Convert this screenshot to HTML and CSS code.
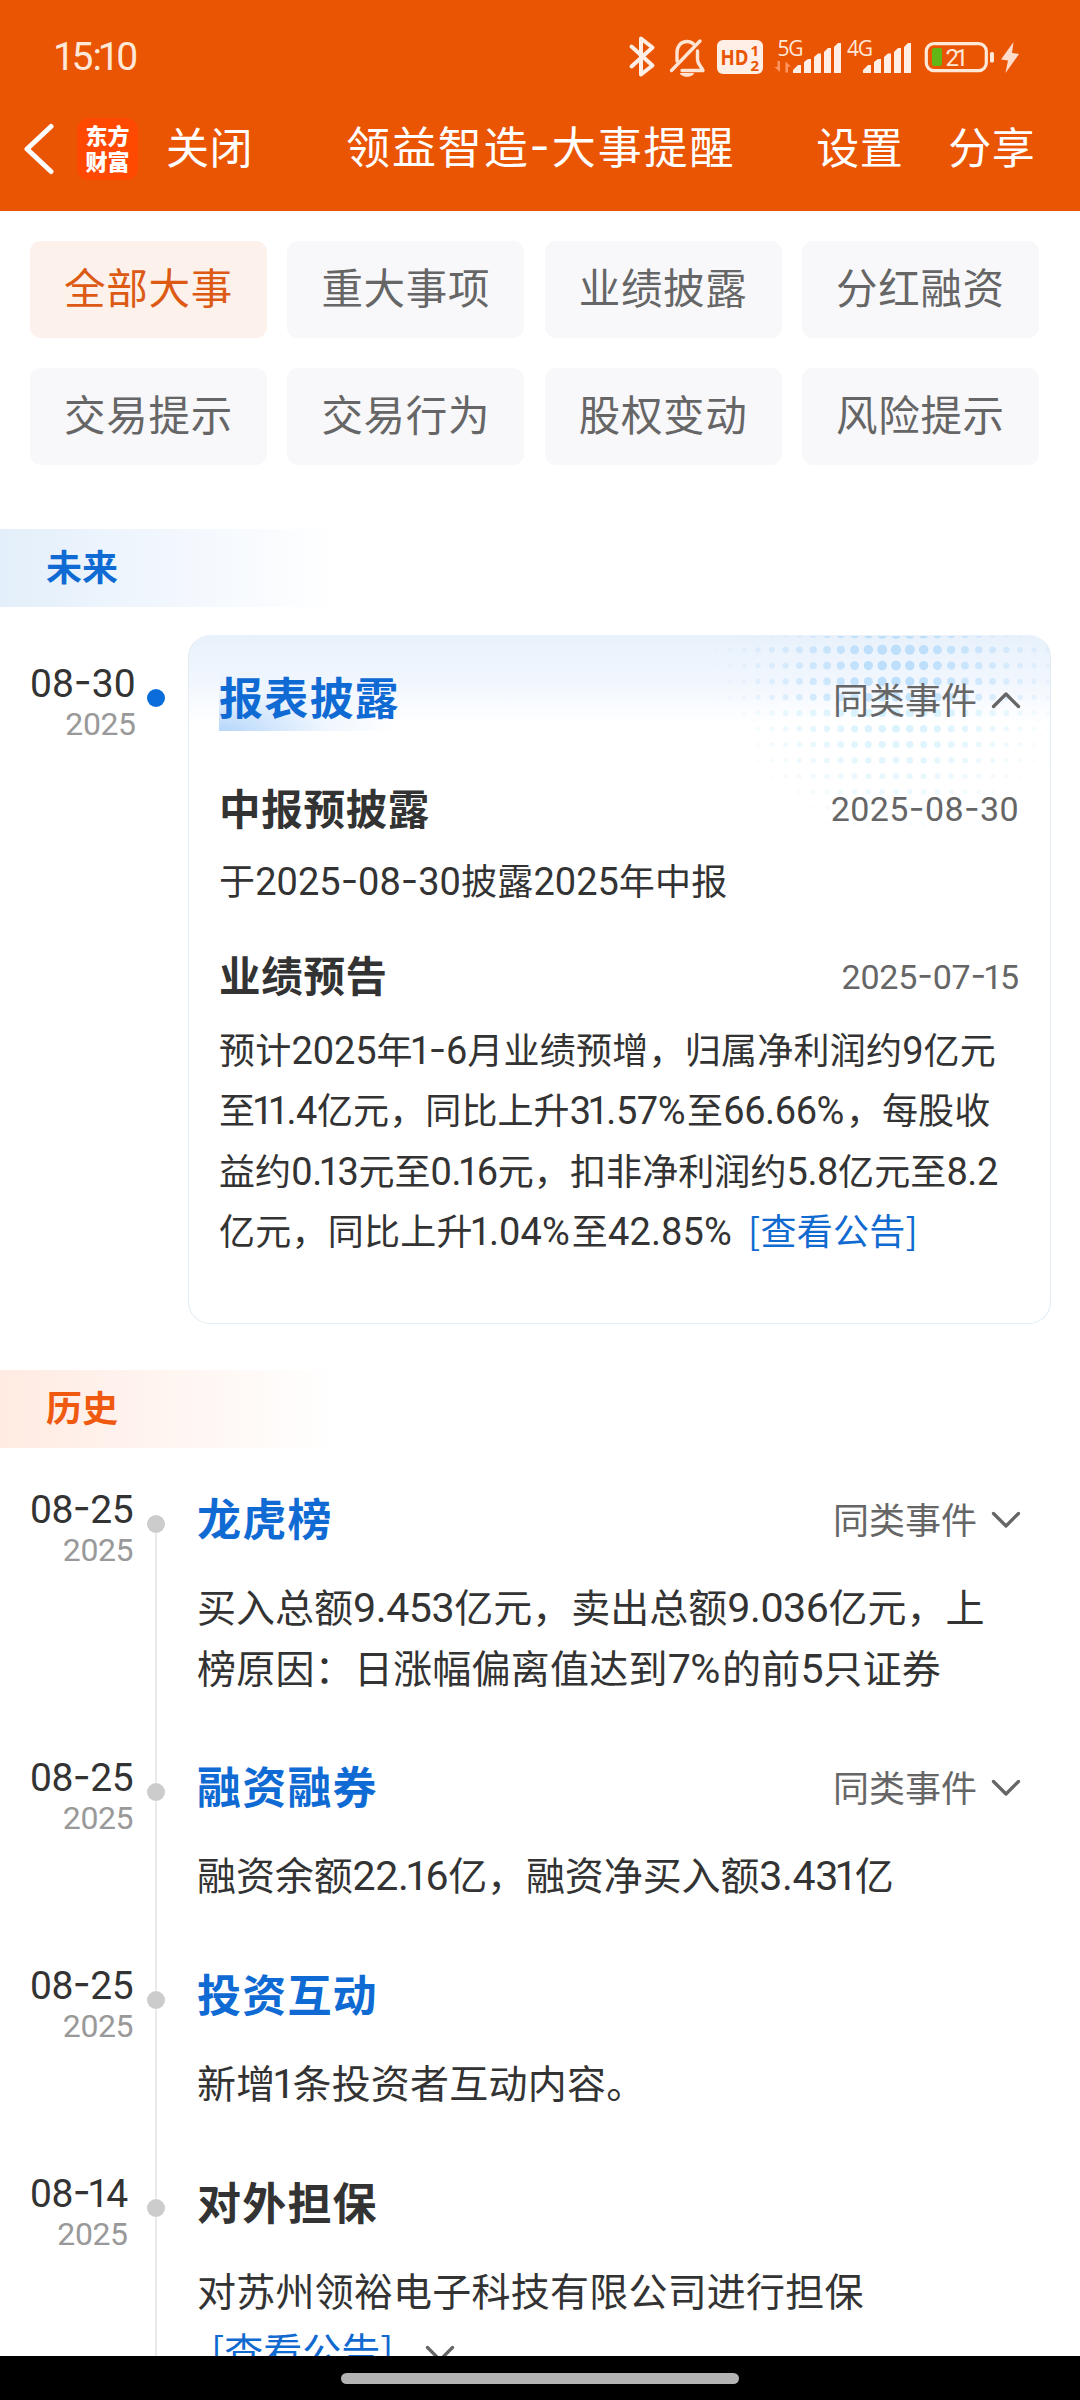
FILE: index.html
```html
<!DOCTYPE html>
<html lang="zh-CN">
<head>
<meta charset="utf-8">
<title>领益智造-大事提醒</title>
<link rel="stylesheet" href="styles.css">
</head>
<body>
<div class="screen">
  <header class="top">
    <div class="status">
      <span class="clock"><i class="one">1</i>5:<i class="one">1</i>0</span>
      <svg class="status-icons" viewBox="620 30 410 50" width="410" height="50">
        <path d="M631.5 46.5 652.5 65.5 641 74.5V38.5L652.5 47.5 631.5 66.5" fill="none" stroke="#ffefe6" stroke-width="4" stroke-linecap="round" stroke-linejoin="round"/>
        <g fill="none" stroke="#ffe3d3" stroke-width="3.4" stroke-linecap="round">
          <path d="M671.5 70.5 700 41"/>
          <path d="M677 61V53C677 46 681 41.500 687 41.500 690 41.500 692 42.500 693.500 44"/>
          <path d="M697.500 51V60C698 65 702 67 703 70.500H682" stroke-linejoin="round"/>
        </g>
        <path d="M680 73h14c-1 5-13 5-14 0z" fill="#ffe3d3"/>
        <rect x="717" y="40" width="46" height="34" rx="6" fill="#ffefe6"/>
        <text class="hd" x="720.500" y="64.500" textLength="28" lengthAdjust="spacingAndGlyphs">HD</text>
        <text class="hd-sub" x="750.500" y="56">1</text>
        <text class="hd-sub" x="750.500" y="70.500">2</text>
        <text class="net" x="777.500" y="55.500" textLength="26">5G</text>
        <path d="M780 61v11l-5.500-5h3V61zM785.500 72.500v-11l5.500 5h-3v6z" fill="#ff9560"/>
        <path d="M793 73v-3l5-5h3v8zM804 73V62l4-3h3v14zM814 73V57l4-3.500h3V73zM824 73V52l4-4h3v25zM834 73V47l4-4h3v30z" fill="#ffefe6"/>
        <text class="net" x="847" y="55.500" textLength="26">4G</text>
        <path d="M863 73v-3l5-5h3v8zM874 73V62l4-3h3v14zM884 73V57l4-3.500h3V73zM894 73V52l4-4h3v25zM904 73V47l4-4h3v30z" fill="#ffefe6"/>
        <rect x="926.300" y="43.600" width="60" height="27" rx="7.500" fill="none" stroke="#ffe8d8" stroke-width="3.200"/>
        <rect x="990" y="52" width="4" height="10.500" rx="1.500" fill="#ffe8d8"/>
        <rect x="932" y="48" width="10" height="18" rx="2" fill="#62b714"/>
        <text class="pct" x="945.500" y="66" textLength="23">21</text>
        <path d="M1013.500 42 1001 59.500 1008 60.500 1005.500 73 1019 54 1012 53z" fill="#ffdccb"/>
      </svg>
    </div>
    <nav class="nav">
      <svg class="back" viewBox="0 0 32 52" width="32" height="52"><path d="M28 3.500 4 26 28 48.500" fill="none" stroke="#fff" stroke-width="5" stroke-linecap="round" stroke-linejoin="round"/></svg>
      <span class="logo"><span>东方</span><span>财富</span></span>
      <span class="close">关闭</span>
      <h1 class="title">领益智造<i class="dash">-</i>大事提醒</h1>
      <span class="act">设置</span>
      <span class="act share">分享</span>
    </nav>
  </header>

  <main class="page">
    <div class="chips">
      <span class="chip on">全部大事</span><span class="chip">重大事项</span><span class="chip">业绩披露</span><span class="chip">分红融资</span>
      <span class="chip">交易提示</span><span class="chip">交易行为</span><span class="chip">股权变动</span><span class="chip">风险提示</span>
    </div>

    <h2 class="band future">未来</h2>
    <section class="item upcoming">
      <div class="when"><div class="when-in"><span class="day">08<i class="dash">-</i>30</span><span class="year">2025</span></div></div>
      <div class="rail"><i class="dot"></i></div>
      <article class="card">
        <svg class="halftone" width="380" height="240"></svg>
        <div class="row head">
          <h3 class="name glow">报表披露</h3>
          <span class="same">同类事件<svg class="chev" viewBox="0 0 30 18" width="30" height="18"><path d="M2.500 15.500 15 3 27.500 15.500"/></svg></span>
        </div>
        <div class="row sub"><h4 class="subname">中报预披露</h4><span class="stamp">2025<i class="dash">-</i>08<i class="dash">-</i>30</span></div>
        <p class="text t0"><span class="line l0">于<b>2025<i class="dash">-</i>08<i class="dash">-</i>30</b>披露<b>2025</b>年中报</span></p>
        <div class="row sub second"><h4 class="subname">业绩预告</h4><span class="stamp s2">2025<i class="dash">-</i>07<i class="dash">-</i><i class="one">1</i>5</span></div>
        <p class="text t1">
          <span class="line">预计<b>2025</b>年<b><i class="one">1</i><i class="dash">-</i>6</b>月业绩预增，归属净利润约<b>9</b>亿元</span>
          <span class="line l2">至<b><i class="one">1</i><i class="one">1</i>.4</b>亿元，同比上升<b>3<i class="one">1</i>.57<i class="per">%</i></b>至<b>66.66<i class="per">%</i></b>，每股收</span>
          <span class="line l3">益约<b>0.<i class="one">1</i>3</b>元至<b>0.<i class="one">1</i>6</b>元，扣非净利润约<b>5.8</b>亿元至<b>8.2</b></span>
          <span class="line l4">亿元，同比上升<b><i class="one">1</i>.04<i class="per">%</i></b>至<b>42.85<i class="per">%</i></b> <a class="link">[查看公告]</a></span>
        </p>
      </article>
    </section>

    <h2 class="band history">历史</h2>
    <section class="list">
      <div class="item first">
        <div class="when"><div class="when-in"><span class="day">08<i class="dash">-</i>25</span><span class="year">2025</span></div></div>
        <div class="rail"><i class="dot"></i></div>
        <div class="body">
          <div class="row"><h3 class="name">龙虎榜</h3><span class="same">同类事件<svg class="chev" viewBox="0 0 30 18" width="30" height="18"><path d="M2.500 2.500 15 15 27.500 2.500"/></svg></span></div>
          <p class="text">
            <span class="line">买入总额<b>9.453</b>亿元，卖出总额<b>9.036</b>亿元，上</span>
            <span class="line loose">榜原因：日涨幅偏离值达到<b>7<i class="per">%</i></b>的前<b>5</b>只证券</span>
          </p>
        </div>
      </div>
      <div class="item">
        <div class="when"><div class="when-in"><span class="day">08<i class="dash">-</i>25</span><span class="year">2025</span></div></div>
        <div class="rail"><i class="dot"></i></div>
        <div class="body">
          <div class="row"><h3 class="name">融资融券</h3><span class="same">同类事件<svg class="chev" viewBox="0 0 30 18" width="30" height="18"><path d="M2.500 2.500 15 15 27.500 2.500"/></svg></span></div>
          <p class="text"><span class="line tight">融资余额<b>22.<i class="one">1</i>6</b>亿，融资净买入额<b>3.43<i class="one">1</i></b>亿</span></p>
        </div>
      </div>
      <div class="item">
        <div class="when"><div class="when-in"><span class="day">08<i class="dash">-</i>25</span><span class="year">2025</span></div></div>
        <div class="rail"><i class="dot"></i></div>
        <div class="body">
          <div class="row"><h3 class="name">投资互动</h3></div>
          <p class="text"><span class="line loose">新增<b><i class="one">1</i></b>条投资者互动内容。</span></p>
        </div>
      </div>
      <div class="item">
        <div class="when"><div class="when-in"><span class="day">08<i class="dash">-</i><i class="one">1</i>4</span><span class="year">2025</span></div></div>
        <div class="rail"><i class="dot"></i></div>
        <div class="body">
          <div class="row"><h3 class="name dark">对外担保</h3></div>
          <p class="text">
            <span class="line loose">对苏州领裕电子科技有限公司进行担保</span>
            <span class="line more"><a class="link">[查看公告]</a><svg class="chev" viewBox="0 0 30 18" width="30" height="18"><path d="M2.500 2.500 15 15 27.500 2.500"/></svg></span>
          </p>
        </div>
      </div>
    </section>
  </main>
  <footer class="gesture"><span class="pill"></span></footer>
</div>
<script src="script.js"></script>
</body>
</html>
```
FILE: styles.css
```css
* { box-sizing: border-box; }
body { margin: 0; background: #fff; font-family: "Noto Sans CJK SC", sans-serif; color: #333; }
h1, h2, h3, h4, p { margin: 0; font-weight: 400; }
i { font-style: normal; }
b { font-family: Roboto, sans-serif; font-weight: 400; font-size: 1.055em; line-height: 0; letter-spacing: -0.01em; }
.dash { font-family: Inter, sans-serif; line-height: 0; position: relative; top: -0.04em; }
.one { margin: 0 -0.06em 0 -0.08em; }
.per { margin-right: 0.05em; }

.screen { width: 1080px; height: 2400px; display: flex; flex-direction: column; overflow: hidden; }

.top { height: 211px; flex: none; background: #ea5504; color: #fff; }
.status { height: 86px; display: flex; justify-content: space-between; align-items: flex-start; padding: 30px 50px 0 56px; }
.clock { font: 400 39px/54px Roboto, sans-serif; color: #ffe8d8; letter-spacing: -1px; }
.status-icons { flex: none; }
.hd { font: 700 21px "Open Sans", sans-serif; fill: #ea5504; }
.hd-sub { font: 700 15px "Open Sans", sans-serif; fill: #ea5504; }
.net { font: 400 21px "Open Sans", sans-serif; fill: #ffe8d8; }
.pct { font: 400 24px Roboto, sans-serif; fill: #ffe8d8; }

.nav { height: 125px; display: flex; align-items: center; font-size: 43px; line-height: 60px; letter-spacing: 0.5px; }
.back { margin-left: 23px; flex: none; }
.logo { width: 61px; height: 62px; margin-left: 22px; border-radius: 12px; background: #ff4800; display: flex; flex-direction: column; align-items: center; justify-content: center; font-size: 22px; line-height: 26px; font-weight: 900; letter-spacing: 0; padding-bottom: 3px; }
.close, .title, .act { padding-bottom: 7px; white-space: nowrap; flex: none; }
.close { margin-left: 28px; }
.title { margin-left: 93px; font-size: 44px; letter-spacing: 1.9px; }
.act { margin-left: 81px; }
.share { margin-left: 45px; }

.page { flex: 1; min-height: 0; overflow: hidden; display: flex; flex-direction: column; }
.chips { flex: none; display: grid; grid-template-columns: repeat(4, 237px); gap: 30px 20.3px; padding: 30px 0 0 30px; }
.chip { height: 97px; border-radius: 11px; background: #f8f8fb; color: #666; font-size: 41.500px; line-height: 91px; letter-spacing: 0.7px; text-align: center; }
.chip.on { background: #fdf1eb; color: #dc5a14; }

.band { flex: none; height: 78px; width: 340px; padding-left: 46px; font-size: 36px; line-height: 72px; font-weight: 700; }
.future { margin-top: 64px; color: #0f6bd3; background: linear-gradient(90deg, #e3effa, #f2f7fe 50%, #fff); }
.history { margin-top: 46px; color: #f05a10; background: linear-gradient(90deg, #ffebe2, #fff5f1 50%, #fff); }

.item { display: flex; }
.when { width: 147px; flex: none; padding: 1px 0 0 30px; }
.when-in { display: inline-flex; flex-direction: column; align-items: flex-end; font-family: Roboto, sans-serif; line-height: 40px; }
.day { font-size: 39px; letter-spacing: -0.5px; }
.year { font-size: 32px; color: #999; letter-spacing: -0.4px; }
.rail { width: 18px; flex: none; display: flex; flex-direction: column; align-items: center; }
.rail::before { content: ""; height: 26px; width: 2px; background: #eaeaea; }
.rail::after { content: ""; flex: 1; width: 2px; background: #eaeaea; }
.dot { width: 18px; height: 18px; flex: none; border-radius: 50%; background: #ccc; }
.first .rail::before { background: none; }

.upcoming { flex: none; margin-top: 28px; }
.upcoming .when { padding-top: 29px; }
.upcoming .day { letter-spacing: 0; }
.upcoming .rail::before { height: 54px; background: none; }
.upcoming .rail::after { background: none; }
.upcoming .dot { background: #0b6cdc; }

.card { position: relative; width: 863px; height: 689px; margin-left: 23px; padding: 31px 30px 0; border: 1px solid #e3edf3; border-top-color: #eaf2fb; border-radius: 22px; overflow: hidden; background: linear-gradient(180deg, #e8f1fb, #f2f7fe 48px, #fff 88px); }
.halftone { position: absolute; right: 0; top: 0; }
.row { position: relative; display: flex; align-items: center; justify-content: space-between; height: 60px; }
.head { height: 64px; }
.name { font-size: 44px; line-height: 56px; height: 60px; font-weight: 700; letter-spacing: 1.2px; color: #0f6bd3; }
.name.dark { color: #333; }
.glow { height: 64px; line-height: 59px; background: radial-gradient(ellipse 180px 64px at 0 100%, #b5d6fb, rgba(225, 238, 254, 0.5) 60%, rgba(255, 255, 255, 0)); }
.same { display: flex; align-items: center; gap: 14px; font-size: 36px; line-height: 56px; padding-bottom: 3px; color: #666; }
.body .same { margin-right: -2px; }
.chev { flex: none; fill: none; stroke: #666; stroke-width: 3.300px; stroke-linecap: round; stroke-linejoin: round; position: relative; top: 2px; }
.card .same { margin-right: -1px; }
.sub { margin-top: 48px; }
.sub.second { margin-top: 34px; }
.subname { font-size: 41.500px; line-height: 56px; padding-bottom: 5px; font-weight: 700; letter-spacing: 0.7px; }
.stamp { font: 400 34px/56px Roboto, sans-serif; color: #666; letter-spacing: 0.4px; margin-right: 1px; }
.s2 { letter-spacing: -0.2px; }
.text { position: relative; top: -2px; }
.card .text { top: -3px; }
.t0 { margin-top: 13px; }
.t1 { margin-top: 14px; }
.line { display: block; height: 60.500px; line-height: 60.500px; white-space: nowrap; }
.card .line { font-size: 36px; letter-spacing: 0.25px; }
.card .line b { letter-spacing: -0.1px; }
.card .l0 b { letter-spacing: 0; }
.card .l2 { letter-spacing: 0.1px; }
.card .l2 b { letter-spacing: -0.4px; }
.card .l3 { letter-spacing: 0.1px; }
.card .l3 b { letter-spacing: -0.4px; }
.card .l4 b { letter-spacing: 0.1px; }
.loose { letter-spacing: 0.22px; }
.tight { letter-spacing: -0.1px; }
.link { color: #116ad0; }
.l4 .link { margin-left: 6px; }

.list { flex: none; margin-top: 41px; }
.body { width: 822px; margin-left: 32px; padding-bottom: 59.200px; }
.body .text { margin-top: 28px; font-size: 39px; }
.more { display: flex; align-items: center; padding-left: 14px; }
.more .chev { margin: 6px 0 0 32px; }

.gesture { flex: none; height: 44px; background: #000; display: flex; justify-content: center; align-items: flex-start; padding-top: 17px; }
.pill { width: 398px; height: 11px; border-radius: 6px; background: #b3b3b3; }
```
FILE: script.js
```js
// Halftone dots in the card's upper right corner: they shrink and fade away from the centre.
(function () {
  var svg = document.querySelector('.halftone');
  var cx = 226, stepX = 13.8, stepY = 15.8;
  for (var r = 0; r < 14; r++) {
    for (var c = -13; c <= 11; c++) {
      var dx = c * stepX, y = -2 + r * stepY;
      var d = Math.sqrt(Math.pow(dx / 188, 2) + Math.pow((y - 14) / 205, 2));
      if (d >= 1) continue;
      var dot = document.createElementNS('http://www.w3.org/2000/svg', 'circle');
      dot.setAttribute('cx', cx + dx);
      dot.setAttribute('cy', y);
      dot.setAttribute('r', 1.7 + 3.5 * (1 - d));
      dot.setAttribute('fill', y < 70 ? '#b6dcfb' : '#c6ecfb');
      dot.setAttribute('opacity', Math.min(1, 1.2 * (1 - d)) * 0.88);
      svg.appendChild(dot);
    }
  }
})();
```
